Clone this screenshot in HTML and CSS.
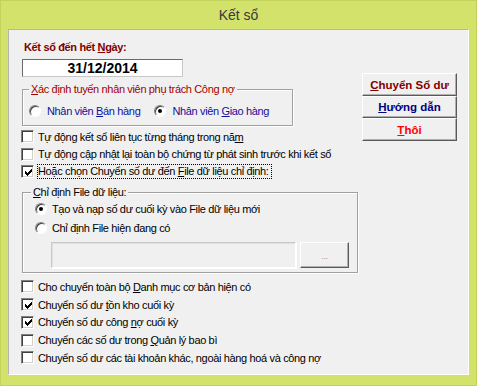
FILE: index.html
```html
<!DOCTYPE html>
<html lang="vi">
<head>
<meta charset="utf-8">
<title>Kết sổ</title>
<link rel="stylesheet" href="styles.css">
</head>
<body>
<div class="window">
  <div class="titlebar">Kết sổ</div>
  <div class="content">
    <div class="top">
      <div class="left">
        <div class="heading">Kết sổ đến hết <u>N</u>gày:</div>
        <div class="date">31/12/2014</div>
        <fieldset class="group g1">
          <legend class="legend-red"><u>X</u>ác định tuyến nhân viên phụ trách Công nợ</legend>
          <div class="radios">
            <label class="radio"><span class="rb"></span><span>Nhân viên <u>B</u>án hàng</span></label>
            <label class="radio second"><span class="rb on"></span><span>Nhân viên <u>G</u>iao hàng</span></label>
          </div>
        </fieldset>
        <div class="checks-top">
          <div class="cb-row"><span class="cb"></span><span>Tự động kết sổ liên tục từng tháng trong nă<u>m</u></span></div>
          <div class="cb-row"><span class="cb"></span><span>Tự động cập nhật lại toàn bộ chứng từ phát sinh trước khi kết sổ</span></div>
          <div class="cb-row"><span class="cb"><svg class="tick" width="7" height="7" viewBox="0 0 7 7" shape-rendering="crispEdges"><path d="M6 0h1v2h-2v-1h1z M0 2h1v1h1v1h1v-1h1v-1h3v1h-1v1h-1v1h-1v1h-1v1h-1v-1h-1v-1h-1z"/></svg></span><span class="focus">Hoặc chọn Chuyển số dư đến <u>F</u>ile dữ liệu chỉ định:</span></div>
        </div>
      </div>
      <div class="buttons">
        <div class="btn btn-red"><span><u>C</u>huyển Sổ dư</span></div>
        <div class="btn btn-blue"><span><u>H</u>ướng dẫn</span></div>
        <div class="btn btn-bright"><span><u>T</u>hôi</span></div>
      </div>
    </div>
    <fieldset class="group g2">
      <legend><u>C</u>hỉ định File dữ liệu:</legend>
      <div class="radio-row"><span class="rb on"></span><span>Tạo và nạp số dư cuối kỳ vào File dữ liệu mới</span></div>
      <div class="radio-row"><span class="rb"></span><span>Chỉ định File hiện đang có</span></div>
      <div class="file-row">
        <div class="file-input"></div>
        <div class="browse">...</div>
      </div>
    </fieldset>
    <div class="checks-bottom">
      <div class="cb-row"><span class="cb"></span><span>Cho chuyển toàn bộ <u>D</u>anh mục cơ bản hiện có</span></div>
      <div class="cb-row"><span class="cb"><svg class="tick" width="7" height="7" viewBox="0 0 7 7" shape-rendering="crispEdges"><path d="M6 0h1v2h-2v-1h1z M0 2h1v1h1v1h1v-1h1v-1h3v1h-1v1h-1v1h-1v1h-1v1h-1v-1h-1v-1h-1z"/></svg></span><span>Chuyển số dư <u>t</u>ồn kho cuối kỳ</span></div>
      <div class="cb-row"><span class="cb"><svg class="tick" width="7" height="7" viewBox="0 0 7 7" shape-rendering="crispEdges"><path d="M6 0h1v2h-2v-1h1z M0 2h1v1h1v1h1v-1h1v-1h3v1h-1v1h-1v1h-1v1h-1v1h-1v-1h-1v-1h-1z"/></svg></span><span>Chuyển số dư công <u>n</u>ợ cuối kỳ</span></div>
      <div class="cb-row"><span class="cb"></span><span>Chuyển các số dư trong <u>Q</u>uản lý bao bì</span></div>
      <div class="cb-row"><span class="cb"></span><span>Chuyển số dư các tài khoản khác, ngoài hàng hoá và công nợ</span></div>
    </div>
  </div>
</div>
</body>
</html>
```
FILE: styles.css
```css
html, body {
  margin: 0;
  padding: 0;
  background: #d3e26b;
}
body {
  font-family: "Liberation Sans", Arial, sans-serif;
  font-size: 11px;
  letter-spacing: -0.35px;
  color: #000;
}
u {
  text-underline-offset: 1px;
}
.window {
  width: 477px;
  height: 386px;
  box-sizing: border-box;
  background: #d3e26b;
  border: 1px solid #c3d25a;
  display: flex;
  flex-direction: column;
}
.titlebar {
  flex: none;
  height: 28px;
  display: flex;
  align-items: center;
  justify-content: center;
  font-size: 14px;
  letter-spacing: 0;
  color: #3a3a3a;
}
.content {
  flex: none;
  margin: 0 7px;
  height: 346px;
  box-sizing: border-box;
  background: #f0f0f0;
  border: 1px solid;
  border-color: #b4b4b4 #ffffff #ffffff #b4b4b4;
  padding: 9px 11px 0 12px;
}
.top {
  display: flex;
  justify-content: space-between;
}
.left {
  width: 330px;
}
.heading {
  margin-left: 3px;
  height: 16px;
  line-height: 16px;
  font-weight: bold;
  color: #800000;
}
.date {
  margin: 4px 0 0 1px;
  width: 161px;
  height: 18px;
  box-sizing: border-box;
  background: #fff;
  border: 1px solid;
  border-color: #6a6a6a #c8c8c8 #c8c8c8 #6a6a6a;
  font-weight: bold;
  font-size: 14px;
  letter-spacing: 0;
  line-height: 16px;
  text-align: center;
}
.group {
  margin: 0;
  min-width: 0;
  border: 1px solid #a0a0a0;
  box-shadow: inset 1px 1px #ffffff, 1px 1px #ffffff;
}
.group legend {
  padding: 0 2px;
  line-height: 14px;
  background: #f0f0f0;
}
.legend-red {
  color: #a00000;
}
.g1 {
  margin: 5px 0 0 1px;
  width: 271px;
  box-sizing: border-box;
  padding: 8px 4px 7px 6px;
}
.radios {
  display: flex;
  align-items: center;
  height: 14px;
}
.radio {
  display: flex;
  align-items: center;
  gap: 6px;
  color: #10109a;
}
.radio.second {
  margin-left: 14px;
}
.rb {
  flex: none;
  position: relative;
  width: 12px;
  height: 12px;
  box-sizing: border-box;
  border-radius: 50%;
  border: 1px solid;
  border-color: #808080 #ffffff #ffffff #808080;
  box-shadow: inset 1px 1px #404040;
  background: #fff;
}
.rb.on::after {
  content: "";
  position: absolute;
  left: 3px;
  top: 3px;
  width: 4px;
  height: 4px;
  border-radius: 50%;
  background: #000;
}
.checks-top {
  margin-top: 2px;
}
.cb-row {
  display: flex;
  align-items: center;
  height: 17.5px;
  gap: 4px;
  white-space: nowrap;
}
.checks-bottom {
  margin-top: 5px;
}
.checks-bottom .cb-row {
  height: 17.75px;
}
.cb {
  flex: none;
  width: 13px;
  height: 13px;
  box-sizing: border-box;
  background: #fff;
  border: 1px solid;
  border-color: #808080 #ffffff #ffffff #808080;
  box-shadow: inset 1px 1px #404040, inset -1px -1px #d4d0c8;
  display: flex;
  align-items: center;
  justify-content: center;
}
.tick {
  display: block;
  fill: #000;
  margin: 1px 0 0 1px;
}
.focus {
  margin-left: -1px;
  border: 1px dotted #000;
  line-height: 13px;
  padding-right: 2px;
}
.buttons {
  flex: none;
  width: 95px;
  margin-top: 34px;
  display: flex;
  flex-direction: column;
}
.btn {
  height: 23px;
  box-sizing: border-box;
  border: 1px solid;
  border-color: #ffffff #5a5a5a #5a5a5a #ffffff;
  box-shadow: inset -1px -1px #b0b0b0;
  display: flex;
  align-items: center;
  justify-content: center;
  font-weight: bold;
  font-size: 11.5px;
  letter-spacing: 0;
}
.btn:nth-child(2) {
  height: 22px;
}
.btn-red { color: #800000; }
.btn-blue { color: #000080; }
.btn-bright { color: #ff0000; }
.g2 {
  margin: 4.5px 0 0 1px;
  width: 336px;
  box-sizing: border-box;
  padding: 0 8px 4px 12px;
}
.g2 legend {
  margin-left: -4px;
}
.radio-row {
  display: flex;
  align-items: center;
  gap: 5px;
  height: 19px;
  white-space: nowrap;
}
.file-row {
  display: flex;
  gap: 4px;
  margin: 5px 0 0 16px;
}
.file-input {
  width: 245px;
  height: 26px;
  box-sizing: border-box;
  background: #f0f0f0;
  border: 1px solid;
  border-color: #c8c8c8 #ffffff #ffffff #c8c8c8;
  box-shadow: 1px 1px #ffffff, inset 1px 1px #e0e0e0;
}
.browse {
  width: 49px;
  height: 26px;
  box-sizing: border-box;
  border: 1px solid;
  border-color: #ffffff #5a5a5a #5a5a5a #ffffff;
  box-shadow: inset -1px -1px #b0b0b0;
  display: flex;
  align-items: flex-end;
  justify-content: center;
  padding-bottom: 6px;
  font-size: 9px;
  color: #a0a0a0;
  line-height: 9px;
}
```
